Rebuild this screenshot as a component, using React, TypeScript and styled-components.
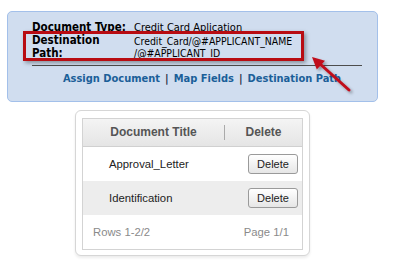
import styled, { createGlobalStyle } from 'styled-components';

const GlobalStyle = createGlobalStyle`
  html, body {
    margin: 0;
    padding: 0;
    background: #ffffff;
    width: 393px;
    height: 272px;
    overflow: hidden;
  }
`;

const Page = styled.div`
  position: relative;
  width: 393px;
  height: 272px;
  padding-top: 11px;
  box-sizing: border-box;
`;

const Panel = styled.div`
  position: relative;
  margin-left: 7px;
  width: 371px;
  height: 91px;
  box-sizing: border-box;
  background: #d0ddef;
  border: 1px solid #a3c0ea;
  border-radius: 5px;
  padding: 9px 15px 0 24px;
  font-family: 'DejaVu Sans Condensed', 'DejaVu Sans', sans-serif;
`;

const InfoGrid = styled.div`
  display: grid;
  grid-template-columns: 102px 1fr;
  width: 330px;
  padding-bottom: 5px;
  border-bottom: 1px solid #4d4d4d;
`;

const Label = styled.div`
  font-weight: bold;
  font-size: 11.5px;
  line-height: 13px;
  color: #000;
`;

const Value = styled.div<{ $small?: boolean }>`
  font-size: ${(p) => (p.$small ? '10.4px' : '11px')};
  line-height: ${(p) => (p.$small ? '12px' : '13px')};
  padding-top: ${(p) => (p.$small ? '1px' : '0')};
  color: #000;
`;

const LinkBar = styled.div`
  display: flex;
  justify-content: center;
  gap: 5px;
  margin-top: 6px;
  width: 330px;
  padding-left: 10px;
  box-sizing: border-box;
  font-size: 11px;
  line-height: 13px;
  font-weight: bold;
`;

const NavLink = styled.a`
  color: #1b5f99;
  text-decoration: none;
  cursor: pointer;
`;

const Sep = styled.span`
  color: #1e2f45;
`;

const Highlight = styled.div`
  position: absolute;
  left: 15px;
  top: 19px;
  width: 281px;
  height: 30px;
  box-sizing: border-box;
  border: 3px solid #b80c12;
  box-shadow: 2px 2px 4px rgba(0, 0, 0, 0.35);
  pointer-events: none;
`;

const Arrow = styled.svg`
  position: absolute;
  left: 293px;
  top: 35px;
  overflow: visible;
`;

const Card = styled.div`
  margin: 8px 0 0 75px;
  width: 235px;
  box-sizing: border-box;
  padding: 7px 6px 5px 6px;
  background: #fff;
  border: 1px solid #d6d6d6;
  border-radius: 6px;
  box-shadow: 0 2px 3px rgba(0, 0, 0, 0.08);
  font-family: Arial, 'Liberation Sans', sans-serif;
`;

const Table = styled.div`
  border: 1px solid #d3d3d3;
`;

const HeaderRow = styled.div`
  display: grid;
  grid-template-columns: 141px 1fr;
  align-items: center;
  height: 27px;
  background: linear-gradient(#f4f4f4, #e5e5e5);
  border-bottom: 1px solid #d0d0d0;
  font-size: 12px;
  font-weight: bold;
  color: #555;
`;

const HeadCell = styled.div<{ $divider?: boolean }>`
  text-align: center;
  line-height: 15px;
  border-left: ${(p) => (p.$divider ? '1px solid #aaa' : 'none')};
`;

const Row = styled.div<{ $alt?: boolean }>`
  display: grid;
  grid-template-columns: 1fr auto;
  align-items: center;
  height: 34px;
  padding: 0 4px 0 26px;
  background: ${(p) => (p.$alt ? '#ededed' : '#fff')};
  font-size: 11.3px;
  color: #222;
`;

const DeleteButton = styled.button`
  width: 50px;
  height: 20px;
  padding: 0;
  font-family: Arial, 'Liberation Sans', sans-serif;
  font-size: 11px;
  color: #222;
  background: linear-gradient(#ffffff, #e6e6e6);
  border: 1px solid #9a9a9a;
  border-radius: 3px;
`;

const Footer = styled.div`
  display: flex;
  justify-content: space-between;
  align-items: center;
  height: 34px;
  padding: 0 13px 0 10px;
  font-size: 11.3px;
  color: #8a8a8a;
`;

const docs = ['Approval_Letter', 'Identification'];

export default function App() {
  return (
    <Page>
      <GlobalStyle />
      <Panel>
        <InfoGrid>
          <Label>Document Type:</Label>
          <Value>Credit Card Aplication</Value>
          <Label>
            Destination
            <br />
            Path:
          </Label>
          <Value $small>
            Credit_Card/@#APPLICANT_NAME
            <br />
            /@#APPLICANT_ID
          </Value>
        </InfoGrid>
        <LinkBar>
          <NavLink>Assign Document</NavLink>
          <Sep>|</Sep>
          <NavLink>Map Fields</NavLink>
          <Sep>|</Sep>
          <NavLink>Destination Path</NavLink>
        </LinkBar>
        <Highlight />
        <Arrow width="60" height="50" viewBox="0 0 60 50">
          <defs>
            <filter id="sh" x="-30%" y="-30%" width="160%" height="160%">
              <feDropShadow dx="2" dy="2" stdDeviation="1.5" floodColor="#000" floodOpacity="0.35" />
            </filter>
          </defs>
          <g filter="url(#sh)">
            <line x1="48" y1="43" x2="18" y2="16" stroke="#c0111a" strokeWidth="3" strokeLinecap="round" />
            <polygon points="11,10 24,13.7 15.8,22.5" fill="#c0111a" />
          </g>
        </Arrow>
      </Panel>
      <Card>
        <Table>
          <HeaderRow>
            <HeadCell>Document Title</HeadCell>
            <HeadCell $divider>Delete</HeadCell>
          </HeaderRow>
          {docs.map((d, i) => (
            <Row key={d} $alt={i % 2 === 1}>
              <span>{d}</span>
              <DeleteButton>Delete</DeleteButton>
            </Row>
          ))}
          <Footer>
            <span>Rows 1-2/2</span>
            <span>Page 1/1</span>
          </Footer>
        </Table>
      </Card>
    </Page>
  );
}
